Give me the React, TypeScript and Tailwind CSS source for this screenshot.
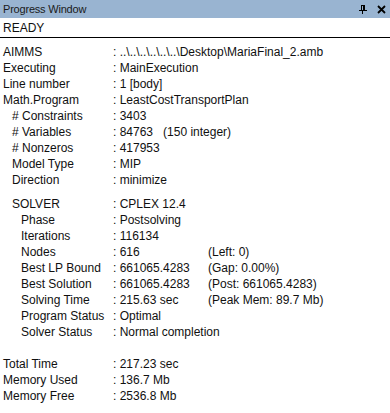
import React from 'react';

type Row = { label: string; indent?: 0 | 1 | 2; value: string; extra?: string; gap?: 'sm' | 'lg' };

const rows: Row[] = [
    { label: 'AIMMS', value: '..\\..\\..\\..\\..\\..\\Desktop\\MariaFinal_2.amb' },
    { label: 'Executing', value: 'MainExecution' },
    { label: 'Line number', value: '1 [body]' },
    { label: 'Math.Program', value: 'LeastCostTransportPlan' },
    { label: '# Constraints', indent: 1, value: '3403' },
    { label: '# Variables', indent: 1, value: '84763   (150 integer)' },
    { label: '# Nonzeros', indent: 1, value: '417953' },
    { label: 'Model Type', indent: 1, value: 'MIP' },
    { label: 'Direction', indent: 1, value: 'minimize' },
    { label: 'SOLVER', indent: 1, value: 'CPLEX 12.4', gap: 'sm' },
    { label: 'Phase', indent: 2, value: 'Postsolving' },
    { label: 'Iterations', indent: 2, value: '116134' },
    { label: 'Nodes', indent: 2, value: '616', extra: '(Left: 0)' },
    { label: 'Best LP Bound', indent: 2, value: '661065.4283', extra: '(Gap: 0.00%)' },
    { label: 'Best Solution', indent: 2, value: '661065.4283', extra: '(Post: 661065.4283)' },
    { label: 'Solving Time', indent: 2, value: '215.63 sec', extra: '(Peak Mem: 89.7 Mb)' },
    { label: 'Program Status', indent: 2, value: 'Optimal' },
    { label: 'Solver Status', indent: 2, value: 'Normal completion' },
    { label: 'Total Time', value: '217.23 sec', gap: 'lg' },
    { label: 'Memory Used', value: '136.7 Mb' },
    { label: 'Memory Free', value: '2536.8 Mb' },
];

const indentClass = ['pl-0', 'pl-[9px]', 'pl-[18px]'];

const App: React.FC = () => {
    return (
        <div
            className="w-[390px] h-[413px] bg-white text-[#101010] overflow-hidden flex flex-col"
            style={{ fontFamily: '"Liberation Sans", Arial, sans-serif' }}
        >
            {/* TITLE BAR */}
            <div className="h-[18px] bg-[#99b4d1] flex items-center justify-between pl-[3px] pr-[4px] shrink-0">
                <span className="text-[11px] leading-none tracking-[-0.2px] text-[#1a1a1a]">Progress Window</span>
                <div className="flex items-center gap-[10px]">
                    <svg width="8" height="9" viewBox="0 0 8 9" shapeRendering="crispEdges">
                        <rect x="2" y="0" width="3" height="5" fill="none" stroke="#000" strokeWidth="1" />
                        <rect x="4" y="0" width="2" height="5" fill="#000" />
                        <rect x="0" y="5" width="8" height="1" fill="#000" />
                        <rect x="3" y="6" width="1" height="3" fill="#000" />
                    </svg>
                    <svg width="9" height="9" viewBox="0 0 9 9">
                        <path d="M1 1 L8 8 M8 1 L1 8" stroke="#000" strokeWidth="1.8" />
                    </svg>
                </div>
            </div>

            {/* STATUS */}
            <div className="h-[20px] flex items-center pl-[3px] border-b border-black shrink-0">
                <span className="text-[12px] leading-none">READY</span>
            </div>

            {/* DETAILS */}
            <div className="pt-[6px] pl-[3px] text-[12px] leading-[16px]">
                {rows.map((r, i) => (
                    <div
                        key={i}
                        className={`grid grid-cols-[110px_95px_1fr] whitespace-pre ${
                            r.gap === 'sm' ? 'mt-[8px]' : r.gap === 'lg' ? 'mt-[16px]' : ''
                        }`}
                    >
                        <span className={indentClass[r.indent ?? 0]}>{r.label}</span>
                        <span>: {r.value}</span>
                        <span>{r.extra ?? ''}</span>
                    </div>
                ))}
            </div>
        </div>
    );
};

export default App;
